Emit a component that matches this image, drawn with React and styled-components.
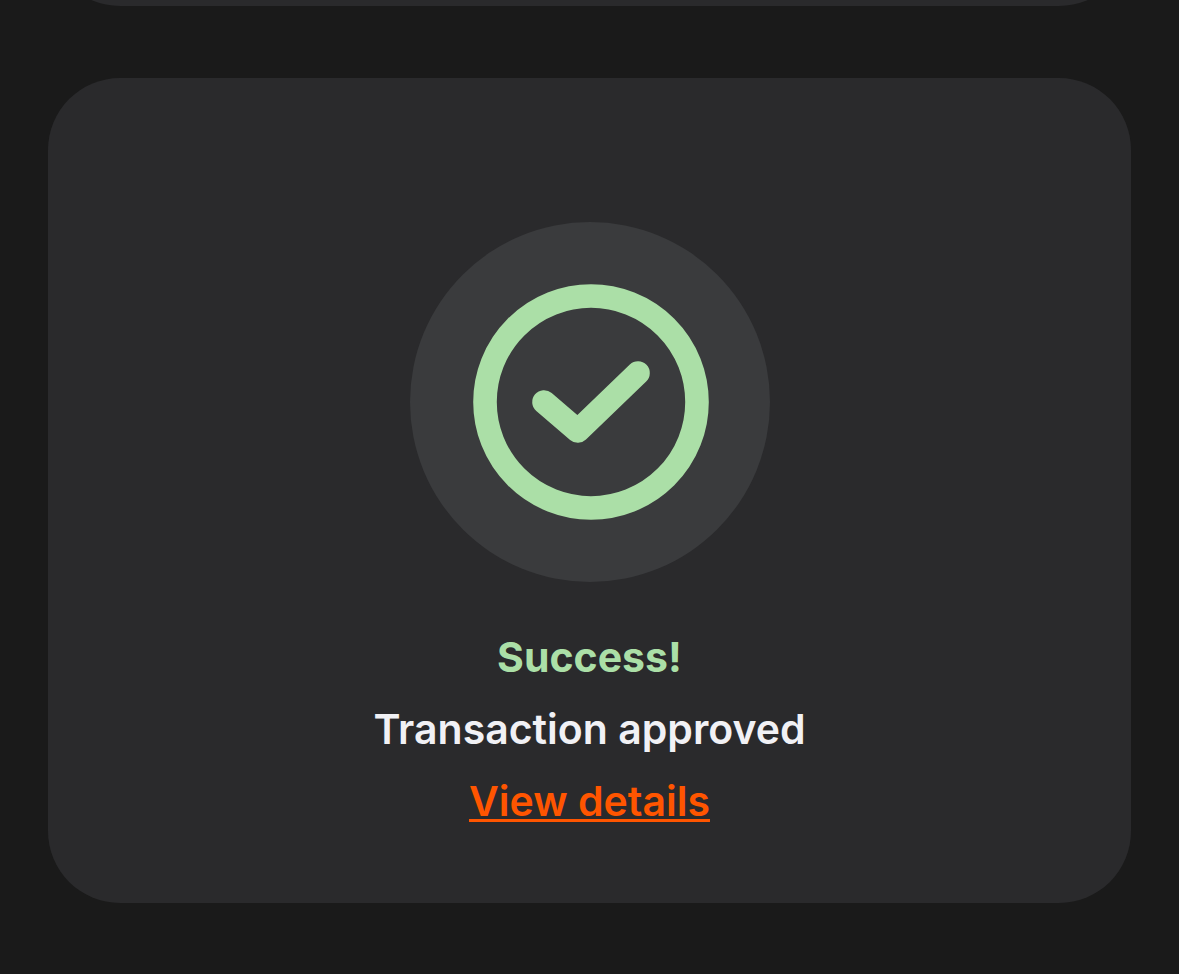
import React from "react";
import styled, { createGlobalStyle } from "styled-components";

const GlobalStyle = createGlobalStyle`
  * { box-sizing: border-box; }
  body {
    margin: 0;
    background: #1a1a1a;
    font-family: Inter, "Liberation Sans", sans-serif;
  }
`;

const Page = styled.main`
  display: flex;
  flex-direction: column;
  gap: 72px;
  min-height: 100vh;
  padding: 0 48px 71px;
`;

const ScrolledAway = styled.div`
  display: flex;
  align-items: flex-end;
  height: 6px;
  overflow: hidden;
`;

const Card = styled.section`
  display: flex;
  flex-direction: column;
  align-items: center;
  flex: 1 0 auto;
  min-height: 144px;
  border-radius: 72px;
  background: #2a2a2c;
  padding: ${(p) => (p.$empty ? "0" : "144px 48px 64px")};
`;

const Badge = styled.div`
  display: flex;
  align-items: center;
  justify-content: center;
  width: 360px;
  height: 360px;
  margin-bottom: 39px;
  border-radius: 50%;
  background: #3a3b3d;
`;

const Message = styled.p`
  margin: 0;
  font-size: 41px;
  line-height: 72px;
  text-align: center;
  font-weight: ${(p) => (p.$strong ? 700 : 600)};
  color: ${(p) => (p.$strong ? "#abdfa7" : "#f1f1f5")};
`;

const DetailsLink = styled.a`
  color: #ff5500;
  text-decoration: underline;
  text-decoration-thickness: 3px;
  text-underline-offset: 3px;
  text-decoration-skip-ink: none;
`;

function CheckIcon() {
  return (
    <svg
      width="240"
      height="240"
      viewBox="0 0 240 240"
      fill="none"
      stroke="#abdfa7"
      strokeWidth="23.6"
      strokeLinecap="round"
      strokeLinejoin="round"
      aria-hidden="true"
    >
      <circle cx="121" cy="120" r="106" />
      <path d="M74 120L107.8 149L168 91" />
    </svg>
  );
}

export default function App() {
  return (
    <>
      <GlobalStyle />
      <Page>
        <ScrolledAway>
          <Card $empty />
        </ScrolledAway>
        <Card>
          <Badge>
            <CheckIcon />
          </Badge>
          <Message $strong>Success!</Message>
          <Message>Transaction approved</Message>
          <Message>
            <DetailsLink href="#details">View details</DetailsLink>
          </Message>
        </Card>
      </Page>
    </>
  );
}
